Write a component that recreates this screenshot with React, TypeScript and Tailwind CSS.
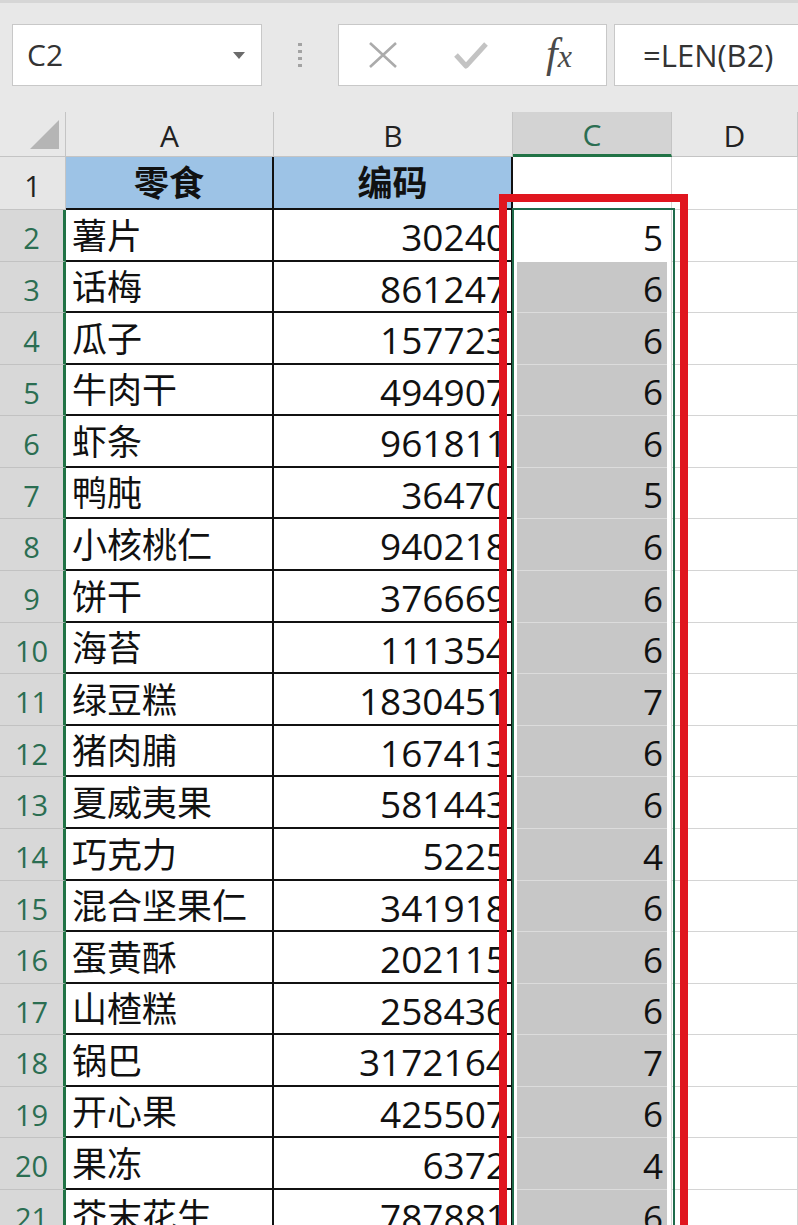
import React from 'react'

type Row = {
  n: number
  name: string
  code: string
  len: number
  h: 'tall' | 'short'
}

const raw: [string, string][] = [
  ['薯片', '30240'],
  ['话梅', '861247'],
  ['瓜子', '157723'],
  ['牛肉干', '494907'],
  ['虾条', '961811'],
  ['鸭肫', '36470'],
  ['小核桃仁', '940218'],
  ['饼干', '376669'],
  ['海苔', '111354'],
  ['绿豆糕', '1830451'],
  ['猪肉脯', '167413'],
  ['夏威夷果', '581443'],
  ['巧克力', '5225'],
  ['混合坚果仁', '341918'],
  ['蛋黄酥', '202115'],
  ['山楂糕', '258436'],
  ['锅巴', '3172164'],
  ['开心果', '425507'],
  ['果冻', '6372'],
  ['芥末花生', '787881'],
]

// row tops follow 210 + k * 51.58, rounded
const rows: Row[] = raw.map(([name, code], i) => {
  const top = Math.round(210 + i * 51.58)
  const next = Math.round(210 + (i + 1) * 51.58)
  return { n: i + 2, name, code, len: code.length, h: next - top === 52 ? 'tall' : 'short' }
})

function Toolbar() {
  return (
    <div className="h-[112px] bg-[#e8e8e8] border-t-[3px] border-[#d6d6d6] flex items-start pt-[21px] pl-[12px]">
      {/* name box */}
      <div className="w-[250px] h-[62px] shrink-0 bg-white border border-[#c8c8c8] flex items-center pl-[14px] pr-[16px]">
        <span className="flex-1 text-[30px] text-[#333] leading-none">C2</span>
        <svg width="12" height="7" viewBox="0 0 12 7">
          <path d="M0 0 L12 0 L6 7 Z" fill="#6b6b6b" />
        </svg>
      </div>
      {/* drag handle */}
      <div className="w-[76px] h-[62px] shrink-0 flex flex-col items-center justify-center gap-[4px]">
        <div className="w-[4px] h-[3px] bg-[#a3a3a3]" />
        <div className="w-[4px] h-[3px] bg-[#a3a3a3]" />
        <div className="w-[4px] h-[3px] bg-[#a3a3a3]" />
        <div className="w-[4px] h-[3px] bg-[#a3a3a3]" />
      </div>
      {/* cancel / enter / fx */}
      <div className="w-[269px] h-[62px] shrink-0 bg-white border border-[#c8c8c8] flex items-center">
        <div className="w-[88px] flex justify-center">
          <svg width="30" height="28" viewBox="0 0 30 28">
            <path d="M2 2 L28 26 M28 2 L2 26" stroke="#ababab" strokeWidth="2.6" fill="none" />
          </svg>
        </div>
        <div className="w-[88px] flex justify-center">
          <svg width="34" height="28" viewBox="0 0 34 28">
            <path d="M2 14 L12 25 L32 3" stroke="#c3c3c3" strokeWidth="5" fill="none" strokeLinejoin="round" />
          </svg>
        </div>
        <div className="w-[88px] flex justify-center">
          <span className="font-['Liberation_Serif',serif] italic text-[42px] leading-none text-[#4a4a4a] -mt-[4px]">
            f<span className="text-[32px]">x</span>
          </span>
        </div>
      </div>
      {/* formula bar */}
      <div className="ml-[7px] w-[200px] h-[62px] shrink-0 bg-white border border-[#c8c8c8] flex items-center pl-[28px]">
        <span className="text-[31px] text-[#333] leading-none whitespace-nowrap">=LEN(B2)</span>
      </div>
    </div>
  )
}

function HeaderRow() {
  return (
    <div className="flex h-[45px] bg-[#e8e8e8] text-[30px] leading-none">
      <div className="w-[66px] shrink-0 border-r border-b border-[#c4c4c4] relative">
        <svg className="absolute left-[30px] top-[8px]" width="29" height="29" viewBox="0 0 29 29">
          <path d="M29 0 L29 29 L0 29 Z" fill="#b5b5b5" />
        </svg>
      </div>
      <div className="w-[208px] shrink-0 border-r border-b border-[#c4c4c4] flex items-center justify-center pt-[4px] text-[#222]">
        A
      </div>
      <div className="w-[239px] shrink-0 border-r border-b border-[#c4c4c4] flex items-center justify-center pt-[4px] text-[#222]">
        B
      </div>
      <div className="w-[159px] shrink-0 bg-[#d3d3d3] border-r border-[#c4c4c4] border-b-[3px] border-b-[#217346] flex items-center justify-center pt-[4px] text-[#2b6e52]">
        C
      </div>
      <div className="w-[126px] shrink-0 border-r border-b border-[#c4c4c4] flex items-center justify-center pt-[4px] text-[#222]">
        D
      </div>
    </div>
  )
}

function TitleRow() {
  return (
    <div className="flex h-[53px]">
      <div className="w-[66px] shrink-0 bg-[#e6e6e6] border-r border-b border-[#c4c4c4] flex items-center justify-center pt-[4px] text-[29px] leading-none text-[#222]">
        1
      </div>
      <div className="w-[208px] shrink-0 bg-[#9dc3e6] border-r-2 border-b-2 border-[#111] flex items-center justify-center text-[35px] font-bold leading-none text-[#111]">
        零食
      </div>
      <div className="w-[239px] shrink-0 bg-[#9dc3e6] border-r-2 border-b-2 border-[#111] flex items-center justify-center text-[35px] font-bold leading-none text-[#111]">
        编码
      </div>
      <div className="w-[159px] shrink-0 bg-white border-r border-[#d4d4d4]" />
      <div className="w-[126px] shrink-0 bg-white border-r border-b border-[#d4d4d4]" />
    </div>
  )
}

function DataRow({ row }: { row: Row }) {
  const active = row.n === 2
  return (
    <div className={row.h === 'tall' ? 'flex h-[52px]' : 'flex h-[51px]'}>
      <div className="w-[66px] shrink-0 bg-[#d8d8d8] border-b border-[#c2c2c2] border-r-[3px] border-r-[#217346] flex items-center justify-center pt-[4px] text-[29px] leading-none text-[#2b6e52]">
        {row.n}
      </div>
      <div className="w-[208px] shrink-0 bg-white border-r-2 border-b-2 border-[#111] flex items-center pl-[6px] text-[35px] leading-none text-[#111] whitespace-nowrap">
        {row.name}
      </div>
      <div className="w-[239px] shrink-0 bg-white border-r-2 border-b-2 border-[#111] flex items-center justify-end pr-[4px] pt-[3px] text-[37px] leading-none text-[#111]">
        {row.code}
      </div>
      <div className="w-[159px] shrink-0 bg-white px-[4px] border-r border-[#d4d4d4]">
        <div
          className={
            active
              ? 'h-full flex items-center justify-end pr-[4px] pt-[3px] text-[35px] leading-none text-[#111]'
              : 'h-full bg-[#c7c7c7] border-b border-[#dcdcdc] flex items-center justify-end pr-[4px] pt-[3px] text-[35px] leading-none text-[#111]'
          }
        >
          {row.len}
        </div>
      </div>
      <div className="w-[126px] shrink-0 bg-white border-r border-b border-[#d4d4d4]" />
    </div>
  )
}

export default function App() {
  return (
    <div className="relative w-[798px] h-[1225px] overflow-hidden bg-white font-['Open_Sans','Noto_Sans_CJK_SC',sans-serif]">
      <Toolbar />
      <HeaderRow />
      <TitleRow />
      {rows.map((r) => (
        <DataRow key={r.n} row={r} />
      ))}

      {/* selection outline C2:C21 */}
      <div className="absolute left-[512px] top-[208px] w-[163px] h-[1100px] border-2 border-[#1f6b4b] pointer-events-none" />
      {/* red highlight frame */}
      <div className="absolute left-[499px] top-[194px] w-[189px] h-[1100px] border-[8px] border-[#e0161f] pointer-events-none" />
    </div>
  )
}
